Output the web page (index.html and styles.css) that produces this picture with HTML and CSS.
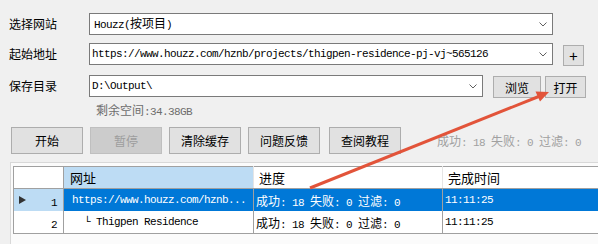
FILE: index.html
```html
<!DOCTYPE html>
<html lang="zh-CN">
<head>
    <meta charset="UTF-8">
    <meta name="viewport" content="width=device-width, initial-scale=1.0">
    <title>Houzz 下载</title>
    <link rel="stylesheet" href="styles.css">
</head>
<body>

    <div class="form">
        <div class="row r1">
            <span class="lbl">选择网站</span>
            <div class="combo site">
                <span class="val pad4"><span class="m">Houzz(</span>按项目<span class="m">)</span></span>
                <svg class="chev" width="8" height="5" viewBox="0 0 8 5"><polyline points="0.5,0.5 4,4 7.5,0.5" fill="none" stroke="#606060" stroke-width="1"/></svg>
            </div>
        </div>
        <div class="row r2">
            <span class="lbl">起始地址</span>
            <div class="combo site">
                <span class="val m">https://www.houzz.com/hznb/projects/thigpen-residence-pj-vj~565126</span>
                <svg class="chev" width="8" height="5" viewBox="0 0 8 5"><polyline points="0.5,0.5 4,4 7.5,0.5" fill="none" stroke="#606060" stroke-width="1"/></svg>
            </div>
            <div class="btn plus">+</div>
        </div>
        <div class="row r3">
            <span class="lbl">保存目录</span>
            <div class="combo dir">
                <span class="val m">D:\Output\</span>
                <svg class="chev" width="8" height="5" viewBox="0 0 8 5"><polyline points="0.5,0.5 4,4 7.5,0.5" fill="none" stroke="#606060" stroke-width="1"/></svg>
            </div>
            <div class="btn browse">浏览</div>
            <div class="btn open">打开</div>
        </div>
        <div class="free">剩余空间<span class="m">:34.38GB</span></div>

        <div class="actions">
            <div class="btn big">开始</div>
            <div class="btn big off">暂停</div>
            <div class="btn big">清除缓存</div>
            <div class="btn big">问题反馈</div>
            <div class="btn big last">查阅教程</div>
            <span class="status">成功<span class="m">: 18 </span>失败<span class="m">: 0 </span>过滤<span class="m">: 0</span></span>
        </div>
    </div>

    <div class="panel">
        <table class="grid">
            <colgroup>
                <col class="c0"><col class="c1"><col class="c2"><col class="c3">
            </colgroup>
            <tr class="head">
                <th class="rh"></th>
                <th class="cur">网址</th>
                <th>进度</th>
                <th>完成时间</th>
            </tr>
            <tr class="sel">
                <td class="rh"><span class="tri"></span><span class="m">1</span></td>
                <td class="url m">https://www.houzz.com/hznb...</td>
                <td>成功<span class="m">: 18 </span>失败<span class="m">: 0 </span>过滤<span class="m">: 0</span></td>
                <td class="m">11:11:25</td>
            </tr>
            <tr>
                <td class="rh"><span class="m">2</span></td>
                <td class="url m">&nbsp;&nbsp;└ Thigpen Residence</td>
                <td>成功<span class="m">: 18 </span>失败<span class="m">: 0 </span>过滤<span class="m">: 0</span></td>
                <td class="m">11:11:25</td>
            </tr>
        </table>
    </div>

    <!-- annotation arrow drawn over the window -->
    <svg class="arrow" width="598" height="244" viewBox="0 0 598 244">
        <line x1="310" y1="188" x2="540" y2="96" stroke="#e2543a" stroke-width="3"/>
        <polygon points="549,92 540,101.5 535.5,91.5" fill="#e2543a"/>
    </svg>

</body>
</html>
```

FILE: styles.css
```css
body {
    margin: 0;
    width: 598px;
    height: 244px;
    overflow: hidden;
    position: relative;
    background-color: #f0f0f0;
    font-family: "Noto Sans CJK SC", sans-serif;
    font-size: 12px;
    color: #000;
}

.m {
    font-family: "Liberation Mono", "Noto Sans CJK SC", monospace;
    font-size: 11px;
    letter-spacing: -0.6px;
}

.form {
    padding: 13px 0 0 9px;
}

.row {
    display: flex;
    align-items: flex-start;
    height: 22px;
}
.r2 {
    margin-top: 8px;
}
.r3 {
    margin-top: 10px;
}

.lbl {
    width: 80px;
    line-height: 22px;
}

.combo {
    box-sizing: border-box;
    height: 22px;
    border: 1px solid #7a7a7a;
    background-color: #fff;
    display: flex;
    align-items: center;
    padding: 0 5px 0 2px;
}
.combo .val {
    flex: 1;
    white-space: nowrap;
    overflow: hidden;
    line-height: 20px;
}
.combo .pad4 {
    padding-left: 2px;
}
.site {
    width: 464px;
}
.dir {
    width: 394px;
}

.btn {
    box-sizing: border-box;
    border: 1px solid #adadad;
    background-color: #e1e1e1;
    display: flex;
    align-items: center;
    justify-content: center;
    height: 22px;
}
.plus {
    width: 21px;
    height: 21px;
    margin: 2px 0 0 10px;
    font-size: 15px;
    line-height: 1;
}
.browse {
    width: 48px;
    margin: 1px 0 0 10px;
}
.open {
    width: 41px;
    margin: 1px 0 0 4px;
}

.free {
    margin: 3px 0 0 87px;
    line-height: 20px;
    color: #6d6d6d;
}

.actions {
    display: flex;
    align-items: center;
    gap: 7px;
    margin: 5px 0 0 2px;
}
.big {
    width: 72px;
    height: 27px;
}
.off {
    background-color: #cccccc;
    border-color: #bfbfbf;
    color: #9d9d9d;
}
.last {
    margin-left: 2px;
}
.status {
    margin-left: 29px;
    color: #a0a0a0;
}

.panel {
    margin: 8px 0 0 10px;
    border-top: 1px solid #d8d8d8;
    border-left: 1px solid #d8d8d8;
    background-color: #fbfbfb;
    padding: 3px 0 0 2px;
    overflow: hidden;
}

.grid {
    border-collapse: collapse;
    table-layout: fixed;
    width: 585px;
    background-color: #fff;
    border-left: 1px solid #a0a0a0;
    border-top: 1px solid #a0a0a0;
    border-bottom: 1px solid #a0a0a0;
    margin-bottom: 20px;
}
.c0 { width: 50px; }
.c1 { width: 190px; }
.c2 { width: 189px; }
.c3 { width: 156px; }

.grid th {
    height: 21px;
    padding: 0 0 0 5px;
    text-align: left;
    font-weight: normal;
    font-size: 13px;
    border-right: 1px solid #e5e5e5;
    border-bottom: 1px solid #a0a0a0;
}
.grid th.rh {
    border-right: 1px solid #a0a0a0;
}
.grid th.cur {
    background-color: #bddcf4;
    padding-left: 6px;
}

.grid td {
    height: 22px;
    padding: 0 0 0 2px;
    white-space: nowrap;
    overflow: hidden;
    border-right: 1px solid #a0a0a0;
}
.grid td.url {
    padding-left: 8px;
}
.grid td.rh {
    text-align: right;
    padding: 0 6px 0 0;
    position: relative;
}
.sel td {
    background-color: #0078d7;
    color: #fff;
}
.sel td.rh {
    background-color: #bddcf4;
    color: #000;
}
.tri {
    position: absolute;
    left: 5px;
    top: 7px;
    border-left: 7px solid #333;
    border-top: 4.5px solid transparent;
    border-bottom: 4.5px solid transparent;
}

.chev {
    flex: none;
}

.arrow {
    position: absolute;
    left: 0;
    top: 0;
    pointer-events: none;
}
```
